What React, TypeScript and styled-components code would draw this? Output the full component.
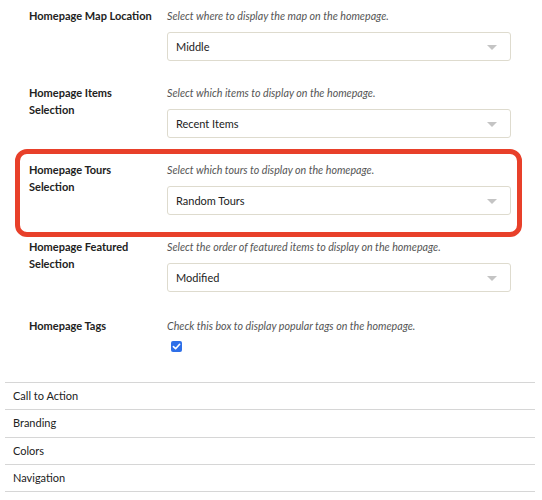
import React from "react";
import styled, { createGlobalStyle } from "styled-components";

const Global = createGlobalStyle`
  html, body { margin: 0; padding: 0; background: #fff; }
  body { font-family: Lato, "Open Sans", Arial, sans-serif; color: #222; }
`;

const Page = styled.div`
  width: 542px;
  height: 500px;
  overflow: hidden;
  background: #fff;
`;

const Form = styled.div`
  display: flex;
  flex-direction: column;
  gap: 23px;
  padding: 7px 31px 0 29px;
`;

const Row = styled.div<{ $highlight?: boolean; $extraTop?: number }>`
  position: relative;
  display: grid;
  grid-template-columns: 124px 1fr;
  column-gap: 14px;
  margin-top: ${(p) => p.$extraTop ?? 0}px;
  ${(p) =>
    p.$highlight &&
    `
    &::after {
      content: "";
      position: absolute;
      top: -12px;
      bottom: -22px;
      left: -14px;
      right: -11px;
      border: 5px solid #e8402a;
      border-radius: 12px;
      pointer-events: none;
    }
  `}
`;

const Label = styled.div`
  font-size: 11px;
  line-height: 17px;
  font-weight: 700;
  color: #222;
`;

const Field = styled.div<{ $gap?: number }>`
  display: flex;
  flex-direction: column;
  gap: ${(p) => p.$gap ?? 8}px;
`;

const Hint = styled.div`
  font-size: 10.7px;
  line-height: 17px;
  font-style: italic;
  color: #555;
`;

const Select = styled.div`
  position: relative;
  height: 29px;
  box-sizing: border-box;
  border: 1px solid #dedbce;
  border-radius: 3px;
  background: #fff;
  display: flex;
  align-items: center;
  padding: 0 8px;
  font-size: 11px;
  color: #222;
`;

const Caret = styled.span`
  position: absolute;
  right: 13px;
  top: 12px;
  width: 0;
  height: 0;
  border-left: 5px solid transparent;
  border-right: 5px solid transparent;
  border-top: 5px solid #c4c4c4;
`;

const Check = styled.span`
  width: 11px;
  height: 11px;
  margin-left: 4px;
  border-radius: 2px;
  background: #2e6fe8;
  display: flex;
  align-items: center;
  justify-content: center;
`;

const Accordion = styled.div`
  margin: 30px 7px 0 5px;
  border-bottom: 1px solid #d6d6d6;
`;

const Section = styled.div`
  border-top: 1px solid #d6d6d6;
  padding: 5px 8px;
  font-size: 11px;
  line-height: 16.3px;
  color: #222;
`;

type Item = { label: string; hint: string; value?: string; highlight?: boolean };

const items: Item[] = [
  { label: "Homepage Map Location", hint: "Select where to display the map on the homepage.", value: "Middle" },
  { label: "Homepage Items Selection", hint: "Select which items to display on the homepage.", value: "Recent Items" },
  { label: "Homepage Tours Selection", hint: "Select which tours to display on the homepage.", value: "Random Tours", highlight: true },
  { label: "Homepage Featured Selection", hint: "Select the order of featured items to display on the homepage.", value: "Modified" },
];

export default function App() {
  return (
    <Page>
      <Global />
      <Form>
        {items.map((it) => (
          <Row key={it.label} $highlight={it.highlight}>
            <Label>{it.label}</Label>
            <Field>
              <Hint>{it.hint}</Hint>
              <Select>
                {it.value}
                <Caret />
              </Select>
            </Field>
          </Row>
        ))}
        <Row $extraTop={2}>
          <Label>Homepage Tags</Label>
          <Field $gap={7}>
            <Hint>Check this box to display popular tags on the homepage.</Hint>
            <Check>
              <svg width="9" height="9" viewBox="0 0 10 10">
                <path d="M1.6 5.2 L4 7.5 L8.5 2.5" fill="none" stroke="#fff" strokeWidth="1.8" strokeLinecap="round" strokeLinejoin="round" />
              </svg>
            </Check>
          </Field>
        </Row>
      </Form>
      <Accordion>
        {["Call to Action", "Branding", "Colors", "Navigation"].map((s) => (
          <Section key={s}>{s}</Section>
        ))}
      </Accordion>
    </Page>
  );
}
